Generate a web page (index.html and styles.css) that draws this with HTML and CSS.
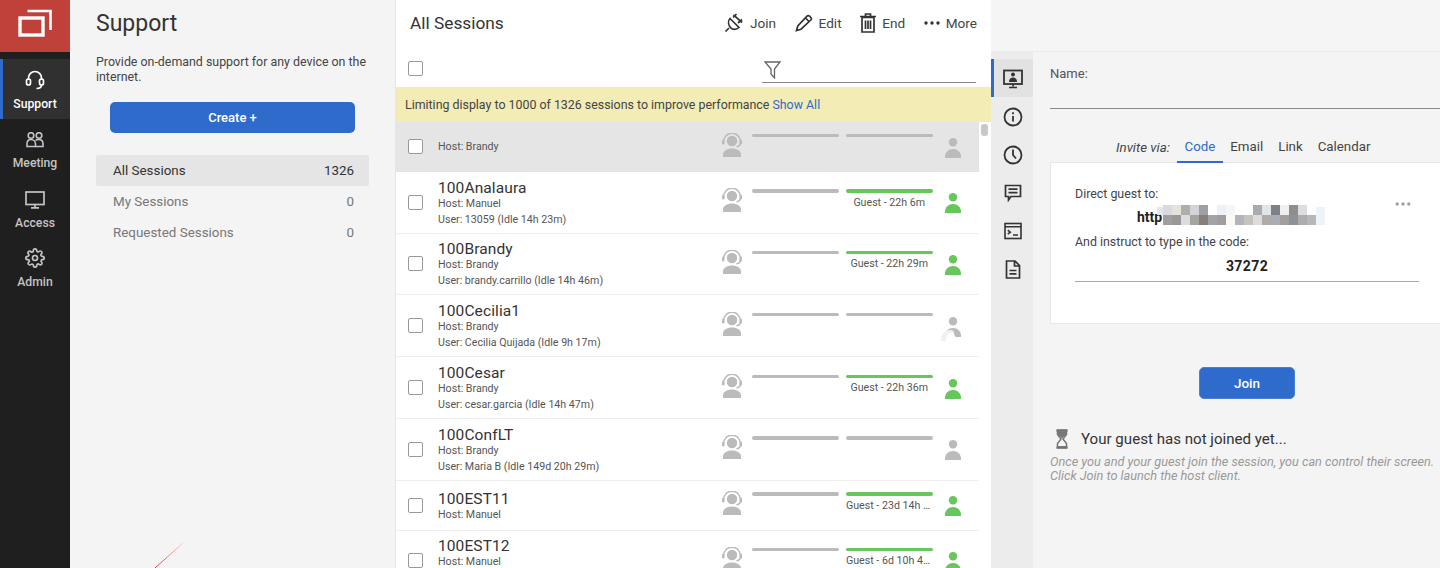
FILE: index.html
```html
<!DOCTYPE html>
<html lang="en">
<head>
<meta charset="utf-8">
<title>Support</title>
<link rel="stylesheet" href="styles.css">
</head>
<body>
<svg class="defs" width="0" height="0" aria-hidden="true">
  <defs>
    <symbol id="agent" viewBox="0 0 20 24">
      <circle cx="10" cy="8" r="5.2" fill="currentColor"/>
      <path d="M1.6 10.5V8.6a8.4 8.4 0 0 1 16.8 0v1.6c0 2-1.6 3.2-4 3.5" fill="none" stroke="currentColor" stroke-width="1.5"/>
      <rect x="0" y="6.5" width="2.4" height="5" rx="1.2" fill="currentColor"/>
      <rect x="17.6" y="6.5" width="2.4" height="5" rx="1.2" fill="currentColor"/>
      <path d="M1 24v-2.500C1 18 5 15.500 10 15.500s9 2.500 9 6V24z" fill="currentColor"/>
    </symbol>
    <symbol id="person" viewBox="0 0 16 20">
      <circle cx="8" cy="4.200" r="4.200" fill="currentColor"/>
      <path d="M0 20v-1.500C0 14.500 3.500 11 8 11s8 3.500 8 7.500V20z" fill="currentColor"/>
    </symbol>
  </defs>
</svg>
<div class="app">
  <nav class="nav">
    <div class="logo">
      <svg width="34" height="28" viewBox="0 0 34 28" fill="none" stroke="#fff">
        <rect x="2" y="9" width="23" height="17" stroke-width="3.400"/>
        <path d="M9.500 2H32.500V21" stroke-width="2.600"/>
      </svg>
    </div>
    <a class="nav-item active">
      <svg width="20" height="20" viewBox="0 0 20 20" fill="none" stroke="currentColor" stroke-width="1.700"><path d="M3.500 10V8a6.500 6.500 0 0 1 13 0v2"/><rect x="1.500" y="9" width="4" height="6" rx="2"/><rect x="14.500" y="9" width="4" height="6" rx="2"/><path d="M16.500 15c0 2.500-2 3.500-5 3.500"/></svg>
      <span>Support</span>
    </a>
    <a class="nav-item">
      <svg width="20" height="17" viewBox="0 0 20 17" fill="none" stroke="currentColor" stroke-width="1.600"><circle cx="6" cy="3.500" r="2.800"/><circle cx="14" cy="3.500" r="2.800"/><path d="M2 14.500v-2.500C2 9.500 3.500 7.500 6 7.500s4.500 2 4.500 4.500v2.500z"/><path d="M10.500 8.500c.8-.7 2-1 3.500-1 2.500 0 4 2 4 4.500v2.500h-7.500"/></svg>
      <span>Meeting</span>
    </a>
    <a class="nav-item">
      <svg width="20" height="18" viewBox="0 0 20 18" fill="none" stroke="currentColor" stroke-width="1.700"><rect x="1" y="1" width="18" height="12.500"/><path d="M10 13.500v2.500M6 16.800h8"/></svg>
      <span>Access</span>
    </a>
    <a class="nav-item">
      <svg width="20" height="20" viewBox="0 0 24 24" fill="none" stroke="currentColor" stroke-width="2"><circle cx="12" cy="12" r="3"/><path d="M19.400 15a1.650 1.650 0 0 0 .33 1.820l.06.06a2 2 0 1 1-2.830 2.830l-.06-.06a1.650 1.650 0 0 0-2.800 1.170V21a2 2 0 0 1-4 0v-.09a1.650 1.650 0 0 0-2.820-1.140l-.06.06a2 2 0 1 1-2.830-2.830l.06-.06A1.650 1.650 0 0 0 3.090 14H3a2 2 0 0 1 0-4h.09a1.650 1.650 0 0 0 1.140-2.820l-.06-.06a2 2 0 1 1 2.830-2.830l.06.06A1.650 1.650 0 0 0 10 3.090V3a2 2 0 0 1 4 0v.09a1.650 1.650 0 0 0 2.820 1.140l.06-.06a2 2 0 1 1 2.830 2.830l-.06.06A1.650 1.650 0 0 0 20.910 10H21a2 2 0 0 1 0 4h-.09a1.650 1.650 0 0 0-1.510 1z"/></svg>
      <span>Admin</span>
    </a>
  </nav>

  <aside class="panel">
    <h1 class="panel-title">Support</h1>
    <p class="panel-text">Provide on-demand support for any device on the internet.</p>
    <button class="btn btn-create">Create +</button>
    <ul class="filters">
      <li class="filter selected"><span>All Sessions</span><span>1326</span></li>
      <li class="filter"><span>My Sessions</span><span>0</span></li>
      <li class="filter"><span>Requested Sessions</span><span>0</span></li>
    </ul>
    <svg class="streak" width="30" height="26" viewBox="0 0 30 26"><defs><linearGradient id="st" x1="0" y1="1" x2="1" y2="0"><stop offset="0" stop-color="#e33a2e"/><stop offset="1" stop-color="#f8d5d2"/></linearGradient></defs><path d="M1 26 29 1" stroke="url(#st)" stroke-width="1"/></svg>
  </aside>

  <main class="list">
    <header class="list-head">
      <h2 class="list-title">All Sessions</h2>
      <div class="actions">
        <a class="action">
          <svg width="20" height="20" viewBox="0 0 20 20" fill="none" stroke="#333" stroke-width="1.700"><path d="M6 5.500 15 14.500c-2.500 2.500-6.500 2.500-8.500 0S3.500 8 6 5.500z"/><path d="M9 4.500 12.500 1M14 10l4-3.500M5 15l-3.500 3.500"/><path d="M9.500 1.800 18 9.500"/></svg>
          <span>Join</span>
        </a>
        <a class="action">
          <svg width="18" height="18" viewBox="0 0 18 18" fill="none" stroke="#333" stroke-width="1.700"><path d="M1.500 16.500 2.800 12 12 2.200a1.800 1.800 0 0 1 2.500 0l1.300 1.300a1.800 1.800 0 0 1 0 2.500L6 15.200z"/><path d="m10.500 4 3.500 3.500"/></svg>
          <span>Edit</span>
        </a>
        <a class="action">
          <svg width="16" height="20" viewBox="0 0 16 20" fill="none" stroke="#333" stroke-width="1.700"><path d="M2 4.500h12V19H2zM0 3.500h16M5.500 3.500V1h5v2.500M5.500 7.500v8.500M8 7.500v8.500M10.500 7.500v8.500"/></svg>
          <span>End</span>
        </a>
        <a class="action">
          <svg width="16" height="4" viewBox="0 0 16 4" fill="#333"><circle cx="2" cy="2" r="1.700"/><circle cx="8" cy="2" r="1.700"/><circle cx="14" cy="2" r="1.700"/></svg>
          <span>More</span>
        </a>
      </div>
    </header>
    <div class="toolbar">
      <span class="check"></span>
      <div class="search">
        <svg width="17" height="18" viewBox="0 0 17 18" fill="none" stroke="#666" stroke-width="1.300"><path d="M1 1h15l-5.500 7v9l-3.500-4V8z"/></svg>
      </div>
    </div>
    <div class="notice">Limiting display to 1000 of 1326 sessions to improve performance <a class="link">Show All</a></div>
    <div class="rows">
      <div class="scroll"><span class="thumb"></span></div>
      <div class="row short current">
        <span class="check"></span>
        <div class="info"><div class="sub">Host: Brandy</div></div>
        <div class="status">
          <svg class="agent"><use href="#agent"/></svg>
          <div class="stat"><span class="bar"></span></div>
          <div class="stat"><span class="bar"></span></div>
          <svg class="guest"><use href="#person"/></svg>
        </div>
      </div>
      <div class="row">
        <span class="check"></span>
        <div class="info"><div class="name">100Analaura</div><div class="sub">Host: Manuel</div><div class="sub">User: 13059 (Idle 14h 23m)</div></div>
        <div class="status">
          <svg class="agent"><use href="#agent"/></svg>
          <div class="stat"><span class="bar"></span></div>
          <div class="stat"><span class="bar on"></span><span class="time">Guest - 22h 6m</span></div>
          <svg class="guest on"><use href="#person"/></svg>
        </div>
      </div>
      <div class="row">
        <span class="check"></span>
        <div class="info"><div class="name">100Brandy</div><div class="sub">Host: Brandy</div><div class="sub">User: brandy.carrillo (Idle 14h 46m)</div></div>
        <div class="status">
          <svg class="agent"><use href="#agent"/></svg>
          <div class="stat"><span class="bar"></span></div>
          <div class="stat"><span class="bar on"></span><span class="time">Guest - 22h 29m</span></div>
          <svg class="guest on"><use href="#person"/></svg>
        </div>
      </div>
      <div class="row">
        <span class="check"></span>
        <div class="info"><div class="name">100Cecilia1</div><div class="sub">Host: Brandy</div><div class="sub">User: Cecilia Quijada (Idle 9h 17m)</div></div>
        <div class="status">
          <svg class="agent"><use href="#agent"/></svg>
          <div class="stat"><span class="bar"></span></div>
          <div class="stat"><span class="bar"></span></div>
          <div class="guest-wrap">
            <svg class="guest"><use href="#person"/></svg>
            <svg class="fade" width="20" height="14" viewBox="0 0 20 14"><path d="M0 14C0 7 4 3 9.500 3S13 9 13 14z" fill="#f1f1f1"/><path d="M5 14C5 9 7 6 10 6s5 3 5 8z" fill="#fff"/></svg>
          </div>
        </div>
      </div>
      <div class="row">
        <span class="check"></span>
        <div class="info"><div class="name">100Cesar</div><div class="sub">Host: Brandy</div><div class="sub">User: cesar.garcia (Idle 14h 47m)</div></div>
        <div class="status">
          <svg class="agent"><use href="#agent"/></svg>
          <div class="stat"><span class="bar"></span></div>
          <div class="stat"><span class="bar on"></span><span class="time">Guest - 22h 36m</span></div>
          <svg class="guest on"><use href="#person"/></svg>
        </div>
      </div>
      <div class="row">
        <span class="check"></span>
        <div class="info"><div class="name">100ConfLT</div><div class="sub">Host: Brandy</div><div class="sub">User: Maria B (Idle 149d 20h 29m)</div></div>
        <div class="status">
          <svg class="agent"><use href="#agent"/></svg>
          <div class="stat"><span class="bar"></span></div>
          <div class="stat"><span class="bar"></span></div>
          <svg class="guest"><use href="#person"/></svg>
        </div>
      </div>
      <div class="row short">
        <span class="check"></span>
        <div class="info"><div class="name">100EST11</div><div class="sub">Host: Manuel</div></div>
        <div class="status">
          <svg class="agent"><use href="#agent"/></svg>
          <div class="stat"><span class="bar"></span></div>
          <div class="stat"><span class="bar on"></span><span class="time">Guest - 23d 14h 41m</span></div>
          <svg class="guest on"><use href="#person"/></svg>
        </div>
      </div>
      <div class="row">
        <span class="check"></span>
        <div class="info"><div class="name">100EST12</div><div class="sub">Host: Manuel</div><div class="sub">&nbsp;</div></div>
        <div class="status">
          <svg class="agent"><use href="#agent"/></svg>
          <div class="stat"><span class="bar"></span></div>
          <div class="stat"><span class="bar on"></span><span class="time">Guest - 6d 10h 41m</span></div>
          <svg class="guest on"><use href="#person"/></svg>
        </div>
      </div>
    </div>
  </main>

  <section class="side">
    <div class="side-top"></div>
    <div class="side-body">
      <div class="rail">
        <a class="rail-item active"><svg width="20" height="20" viewBox="0 0 20 20"><rect x="1" y="1.500" width="18" height="13.500" fill="none" stroke="#333" stroke-width="1.800"/><circle cx="10" cy="5.500" r="2" fill="#333"/><path d="M6 13c0-3 1.500-4.500 4-4.500s4 1.500 4 4.500z" fill="#333"/><path d="M10 15v2.500M6 18.500h8" stroke="#333" stroke-width="1.600"/></svg></a>
        <a class="rail-item"><svg width="20" height="20" viewBox="0 0 20 20" fill="none" stroke="#333" stroke-width="1.800"><circle cx="10" cy="10" r="8.500"/><path d="M10 9v5.500M10 5.200v2"/></svg></a>
        <a class="rail-item"><svg width="20" height="20" viewBox="0 0 20 20" fill="none" stroke="#333" stroke-width="1.800"><circle cx="10" cy="10" r="8.500"/><path d="M10 4.500V10l3 3.500"/></svg></a>
        <a class="rail-item"><svg width="18" height="18" viewBox="0 0 18 18" fill="none" stroke="#333" stroke-width="1.700"><path d="M1.500 1.500h15v11H7L4.500 16v-3.500h-3z"/><path d="M4.500 5.200h9M4.500 8.700h9"/></svg></a>
        <a class="rail-item"><svg width="18" height="18" viewBox="0 0 18 18" fill="none" stroke="#333" stroke-width="1.600"><rect x="1" y="1.500" width="16" height="15"/><path d="M1 4.800h16M3.800 8.200l2.500 2-2.500 2M9 13h5"/></svg></a>
        <a class="rail-item"><svg width="16" height="19" viewBox="0 0 16 19" fill="none" stroke="#333" stroke-width="1.700"><path d="M1.500 1h8.500l4.500 4.500V18h-13zM9.500 1v5h5M4.500 10.500h7M4.500 13.800h7"/></svg></a>
      </div>
      <div class="detail">
        <label class="field-label">Name:</label>
        <div class="field-line"></div>
        <div class="tabs">
          <em class="tabs-label">Invite via:</em>
          <a class="tab active">Code</a>
          <a class="tab">Email</a>
          <a class="tab">Link</a>
          <a class="tab">Calendar</a>
        </div>
        <div class="card">
          <div class="card-label">Direct guest to:</div>
          <div class="url-row">
            <strong class="url">http</strong>
            <svg class="mosaic" width="170" height="22" viewBox="0 0 170 20" preserveAspectRatio="none" shape-rendering="crispEdges">
              <g transform="translate(2 0)">
              <path d="M-2 3h8v7h-8z" fill="#e4e6ec"/><path d="M4 1h9v9H4z" fill="#d8dade"/>
              <path d="M13 1h9v9h-9z" fill="#e5e2dc"/><path d="M22 1h9v9h-9z" fill="#b0aeac"/><path d="M31 1h9v9h-9z" fill="#d3d4d8"/><path d="M40 1h9v9h-9z" fill="#a0a0a4"/><path d="M58 1h9v9h-9z" fill="#eef2f6"/><path d="M67 1h9v9h-9z" fill="#f5f6f7"/><path d="M94 1h9v9h-9z" fill="#a9acaf"/><path d="M103 1h9v9h-9z" fill="#e3e4e5"/><path d="M112 1h9v9h-9z" fill="#7d8087"/><path d="M121 1h9v9h-9z" fill="#f0f0f0"/><path d="M130 1h9v9h-9z" fill="#908e8c"/><path d="M139 1h9v9h-9z" fill="#dcdde0"/>
              <path d="M4 10h9v9H4z" fill="#a39e9e"/><path d="M13 10h9v9h-9z" fill="#9b9797"/><path d="M22 10h9v9h-9z" fill="#dcdcdc"/><path d="M31 10h9v9h-9z" fill="#a6a3a3"/><path d="M40 10h9v9h-9z" fill="#877f78"/><path d="M49 10h9v9h-9z" fill="#a0a3a8"/><path d="M58 10h9v9h-9z" fill="#a09d9f"/><path d="M67 10h9v9h-9z" fill="#fbf9f6"/><path d="M76 10h9v9h-9z" fill="#b3b4ba"/><path d="M85 10h9v9h-9z" fill="#c6c2be"/><path d="M94 10h9v9h-9z" fill="#dcdcdb"/><path d="M103 10h9v9h-9z" fill="#b0aba6"/><path d="M112 10h9v9h-9z" fill="#a9aeb6"/><path d="M121 10h9v9h-9z" fill="#a3a09c"/><path d="M130 10h9v9h-9z" fill="#8d929a"/><path d="M139 10h9v9h-9z" fill="#adadb0"/><path d="M148 10h9v9h-9z" fill="#b7b7ba"/><path d="M157 3h9v16h-9z" fill="#eef3fa"/>
              </g>
            </svg>
            <svg class="dots" width="16" height="4" viewBox="0 0 16 4" fill="#a0a0a0"><circle cx="2.200" cy="2" r="1.700"/><circle cx="8" cy="2" r="1.700"/><circle cx="13.800" cy="2" r="1.700"/></svg>
          </div>
          <div class="card-label">And instruct to type in the code:</div>
          <div class="code">37272</div>
        </div>
        <div class="join-wrap"><button class="btn btn-join">Join</button></div>
        <div class="wait">
          <svg width="14" height="20" viewBox="0 0 14 20"><path d="M1.500 1.500h11M1.500 18.500h11" stroke="#666" stroke-width="2.600" fill="none"/><path d="M2.500 2v3.500L6 10l-3.500 4.500V18h9v-3.500L8 10l3.500-4.500V2z" fill="none" stroke="#777" stroke-width="1.500"/><path d="M3 3h8v2.500L7 9.500 3 5.500z" fill="#777"/></svg>
          <span>Your guest has not joined yet...</span>
        </div>
        <p class="hint">Once you and your guest join the session, you can control their screen.<br>Click Join to launch the host client.</p>
      </div>
    </div>
  </section>
</div>
</body>
</html>
```
FILE: styles.css
```css
* { box-sizing: border-box; }
html, body { margin: 0; height: 100%; overflow: hidden; }
body { font-family: Roboto, "Liberation Sans", sans-serif; color: #333; background: #f4f4f4; }
.defs { display: block; position: absolute; }
h1, h2, p, ul { margin: 0; padding: 0; }
.app { display: flex; width: 1440px; height: 568px; overflow: hidden; }

.nav { width: 70px; flex: none; background: #1f1f1f; color: #c4c4c4; }
.logo { height: 52px; margin-bottom: 7px; background: #c0403a; display: flex; align-items: center; justify-content: center; padding-bottom: 6px; }
.nav-item { height: 59.500px; display: flex; flex-direction: column; align-items: center; justify-content: flex-end; gap: 7px; padding-bottom: 7px; font-size: 12.200px; line-height: 15px; font-weight: 500; }
.nav-item.active { background: #303030; color: #fff; box-shadow: inset 3px 0 0 #2e6bcb; }

.panel { position: relative; width: 326px; flex: none; background: #f4f4f4; border-right: 1px solid #e6e6e6; padding: 0 26px 0 26px; }
.panel-title { font-size: 23px; font-weight: 400; line-height: 28px; margin-top: 10px; color: #333; }
.panel-text { font-size: 12.400px; line-height: 14.500px; margin-top: 17px; color: #444; width: 280px; }
.btn { display: block; border: 0; background: #2e6bcb; color: #fff; font-family: inherit; font-weight: 500; font-size: 13px; border-radius: 5px; }
.btn-create { width: 245px; height: 31px; margin: 18px 0 0 14px; }
.filters { list-style: none; margin-top: 22px; width: 273px; }
.filter { height: 31px; display: flex; justify-content: space-between; align-items: center; padding: 0 15px 0 17px; font-size: 13.400px; color: #777; }
.filter.selected { background: #e5e5e5; color: #333; border-radius: 2px; }
.streak { position: absolute; left: 84px; bottom: 0; }

.list { width: 595px; flex: none; background: #fff; display: flex; flex-direction: column; }
.list-head { height: 47px; flex: none; display: flex; justify-content: space-between; align-items: center; padding: 0 14px 1px 14px; }
.list-title { font-size: 17.300px; font-weight: 400; line-height: 24px; color: #333; }
.actions { display: flex; gap: 18.600px; }
.action { display: flex; align-items: center; gap: 6px; font-size: 13.600px; color: #444; }
.toolbar { height: 40px; flex: none; display: flex; align-items: center; justify-content: space-between; padding: 3px 15px 0 12px; }
.check { display: block; flex: none; width: 15px; height: 15px; border: 1px solid #999; border-radius: 2px; background: #fff; }
.search { width: 214px; height: 22px; border-bottom: 1px solid #888; padding-left: 2px; align-self: flex-end; margin-bottom: 4px; }
.notice { height: 35px; flex: none; display: flex; align-items: center; gap: 3px; background: #f3ecb5; padding-left: 9px; font-size: 12.400px; color: #444; }
.link { color: #2e6bcb; }
.rows { position: relative; padding-right: 12px; }
.scroll { position: absolute; top: 0; right: 0; width: 12px; height: 100%; background: #fff; }
.thumb { display: block; width: 7px; height: 12px; margin: 2px 0 0 2px; border-radius: 3px; background: #c8c8c8; }
.row { height: 61.800px; display: flex; align-items: center; padding-left: 12px; border-bottom: 1.500px solid #eee; }
.row.short { height: 49.800px; }
.row.current { background: #e5e5e5; border-bottom: 0; }
.info { width: 284px; margin-left: 15px; flex: none; }
.name { font-size: 15.500px; line-height: 23px; margin-bottom: -4px; color: #333; letter-spacing: .1px; }
.sub { font-size: 10.650px; line-height: 16px; color: #555; }
.status { display: flex; height: 26px; align-items: flex-start; color: #bbb; }
.agent { width: 20px; height: 24px; flex: none; color: #bbb; margin-top: -1px; }
.stat { margin-left: 10px; width: 86.500px; flex: none; display: flex; flex-direction: column; align-items: center; }
.stat + .stat { margin-left: 7.500px; }
.bar { display: block; width: 100%; height: 3.500px; border-radius: 2px; background: #bbb; }
.bar.on { background: #66c75a; }
.time { display: block; max-width: 100%; margin-top: 2px; font-size: 10.650px; line-height: 16px; color: #555; white-space: nowrap; overflow: hidden; text-overflow: ellipsis; }
.guest { width: 16px; height: 20px; flex: none; margin-left: 12px; margin-top: 4px; color: #bbb; }
.guest.on { color: #66c75a; }
.guest-wrap { position: relative; display: flex; flex: none; }
.fade { position: absolute; left: 8px; top: 14px; }

.side { flex: 1; display: flex; flex-direction: column; min-width: 0; }
.side-top { height: 52px; flex: none; background: #f5f5f5; border-bottom: 1px solid #ececec; }
.side-body { flex: 1; display: flex; min-height: 0; }
.rail { width: 42px; flex: none; background: #ececec; padding-top: 7px; }
.rail-item { height: 38.100px; display: flex; align-items: center; justify-content: center; padding: 1px 0 0 2px; }
.rail-item.active { background: #e2e2e2; box-shadow: inset 3px 0 0 #2e6bcb; }
.detail { flex: 1; min-width: 0; padding: 14px 0 0 17px; background: #f4f4f4; }
.field-label { display: block; font-size: 13px; line-height: 16px; color: #555; }
.field-line { height: 26.500px; border-bottom: 1px solid #888; }
.tabs { display: flex; align-items: flex-end; height: 53.500px; font-size: 13.300px; color: #444; }
.tabs-label { width: 61px; margin-left: 66px; padding-bottom: 6px; line-height: 16px; font-size: 13.300px; color: #444; }
.tab { padding: 0 7.500px 6px; line-height: 16px; border-bottom: 2px solid transparent; margin-bottom: -1px; }
.tab.active { color: #2e6bcb; border-bottom-color: #2e6bcb; position: relative; }
.card { height: 162px; background: #fff; border: 1px solid #e8e8e8; border-right: 0; padding: 23px 21px 0 24px; }
.card-label { font-size: 12.400px; line-height: 15px; color: #444; }
.url-row { position: relative; height: 33px; padding: 6px 0 0 62px; }
.url { font-size: 14px; font-weight: 700; line-height: 19px; color: #222; }
.mosaic { position: absolute; left: 82px; top: 3px; }
.dots { position: absolute; right: 8px; top: 1px; }
.code { margin-top: 6px; height: 27px; border-bottom: 1px solid #aaa; text-align: center; font-size: 14px; font-weight: 700; line-height: 22px; color: #222; letter-spacing: .4px; }
.join-wrap { margin-top: 43px; padding-left: 149px; }
.btn-join { width: 96px; height: 32px; border: 1px solid #4a80d4; border-radius: 5px; font-size: 13.500px; }
.wait { display: flex; align-items: center; gap: 12px; margin-top: 29px; padding-left: 5px; font-size: 15.100px; line-height: 22px; color: #333; }
.hint { margin-top: 5px; font-style: italic; font-size: 12.700px; line-height: 14px; color: #999; white-space: nowrap; }
```
